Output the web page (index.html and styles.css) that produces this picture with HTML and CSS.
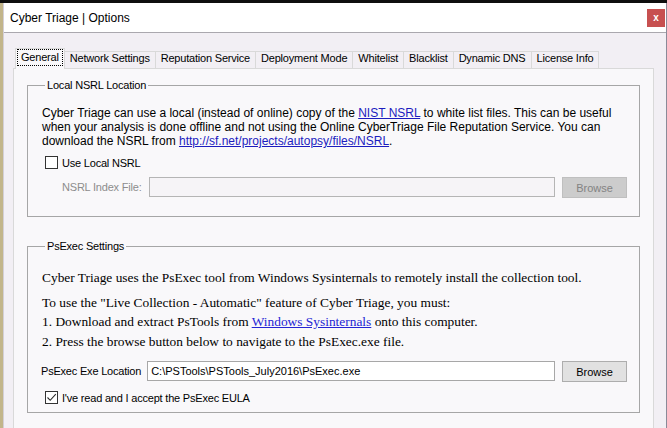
FILE: index.html
```html
<!DOCTYPE html>
<html lang="en">
<head>
<meta charset="utf-8">
<title>Cyber Triage | Options</title>
<link rel="stylesheet" href="styles.css">
</head>
<body>
<div class="screen">
  <div class="topstrip"></div>
  <div class="window">
    <header class="titlebar">
      <span class="title">Cyber Triage | Options</span>
      <button class="close" type="button">x</button>
    </header>
    <div class="client">
      <nav class="tabs">
        <div class="tab active"><span class="focus">General</span></div>
        <div class="tab">Network Settings</div>
        <div class="tab">Reputation Service</div>
        <div class="tab">Deployment Mode</div>
        <div class="tab">Whitelist</div>
        <div class="tab">Blacklist</div>
        <div class="tab">Dynamic DNS</div>
        <div class="tab">License Info</div>
      </nav>
      <div class="panel">
        <fieldset class="group group-nsrl">
          <legend>Local NSRL Location</legend>
          <p class="desc">Cyber Triage can use a local (instead of online) copy of the <a href="#">NIST NSRL</a> to white list files. This can be useful when your analysis is done offline and not using the Online CyberTriage File Reputation Service. You can download the NSRL from <a href="#">http://sf.net/projects/autopsy/files/NSRL</a>.</p>
          <label class="check check-nsrl"><span class="box"></span>Use Local NSRL</label>
          <div class="row row-nsrl">
            <span class="field-label disabled">NSRL Index File:</span>
            <span class="input input-disabled"></span>
            <button class="btn btn-disabled" type="button">Browse</button>
          </div>
        </fieldset>
        <fieldset class="group group-psexec">
          <legend>PsExec Settings</legend>
          <p class="serif first">Cyber Triage uses the PsExec tool from Windows Sysinternals to remotely install the collection tool.</p>
          <p class="serif">To use the "Live Collection - Automatic" feature of Cyber Triage, you must:<br>1. Download and extract PsTools from <a href="#">Windows Sysinternals</a> onto this computer.<br>2. Press the browse button below to navigate to the PsExec.exe file.</p>
          <div class="row row-psexec">
            <span class="field-label">PsExec Exe Location</span>
            <span class="input">C:\PSTools\PSTools_July2016\PsExec.exe</span>
            <button class="btn" type="button">Browse</button>
          </div>
          <label class="check check-eula"><span class="box checked"><svg width="11" height="11" viewBox="0 0 11 11"><path d="M1.5 5.5 L4.2 8.3 L9.8 2.2" fill="none" stroke="#2b2b2b" stroke-width="1.1"/></svg></span>I've read and I accept the PsExec EULA</label>
        </fieldset>
      </div>
    </div>
  </div>
</div>
</body>
</html>
```
FILE: styles.css
```css
* { box-sizing: border-box; }
html, body { margin: 0; padding: 0; }
body {
  width: 667px;
  height: 428px;
  overflow: hidden;
  background: #c2b58a;
  font-family: "Liberation Sans", Arial, sans-serif;
  color: #000;
}
.screen { display: flex; flex-direction: column; height: 428px; }
.topstrip { height: 3px; flex: none; background: #0e0e0e; }
.window {
  flex: 1;
  margin-left: 3px;
  display: flex;
  flex-direction: column;
  background: #f2eff4;
  border-left: 1px solid #d3cfd7;
  border-right: 1px solid #8a8a98;
}
.titlebar {
  height: 30px;
  flex: none;
  background: #ffffff;
  border-bottom: 1px solid #aaa8ae;
  display: flex;
  align-items: center;
  justify-content: space-between;
  padding-left: 6px;
}
.title { font-size: 12px; color: #000; }
.close {
  width: 18px;
  height: 18px;
  margin: 1px 1px 0 0;
  padding: 0;
  border: none;
  background: #c75050;
  color: #fff;
  font-family: "Liberation Sans", Arial, sans-serif;
  font-weight: bold;
  font-size: 10px;
  line-height: 16px;
}
.client {
  flex: 1;
  display: flex;
  flex-direction: column;
  padding: 15px 12px 0 9px;
}
.tabs {
  display: flex;
  align-items: flex-end;
  height: 20px;
  margin-left: 2px;
  font-size: 11px;
}
.tab {
  height: 17px;
  padding: 0 5px;
  line-height: 13px;
  border-top: 1px solid #d9d9d9;
  border-right: 1px solid #d9d9d9;
  white-space: nowrap;
  letter-spacing: -0.2px;
}
.tab.active {
  position: relative;
  z-index: 1;
  height: 21px;
  margin-bottom: -1px;
  padding: 0 1px;
  background: #f9f8fa;
  border: 1px solid #d9d9d9;
  border-bottom: none;
}
.focus {
  display: block;
  height: 17px;
  padding: 0 3px;
  line-height: 14px;
  border: 1px dotted #000;
}
.panel {
  flex: 1;
  background: #f9f8fa;
  border: 1px solid #d9d9d9;
  border-bottom: none;
  padding: 10px 13px 0 13px;
}
.group {
  margin: 0;
  padding: 0 12px 0 14px;
  border: 1px solid #a6a6a6;
  min-width: 0;
}
.group legend {
  margin-left: 3px;
  padding: 0 2px;
  font-size: 11px;
  line-height: 13px;
  letter-spacing: -0.2px;
}
.group-psexec { margin-top: 23px; padding-bottom: 8px; }
.group-nsrl { padding-bottom: 18px; }
.desc {
  margin: 14px 0 0;
  font-size: 12px;
  line-height: 14px;
}
.desc a { color: #1c1cbf; text-decoration: underline; }
.serif a { color: #2424d4; text-decoration: underline; }
.check {
  display: flex;
  align-items: center;
  height: 13px;
  margin-left: 3px;
  font-size: 11px;
  letter-spacing: -0.2px;
}
.check-nsrl { margin-top: 8px; }
.check-eula { margin-top: 9px; }
.box {
  width: 13px;
  height: 13px;
  flex: none;
  margin-right: 4px;
  border: 1px solid #333;
  background: #fff;
  display: flex;
  align-items: center;
  justify-content: center;
}
.row {
  display: flex;
  align-items: flex-start;
  height: 21px;
  font-size: 11px;
}
.row-nsrl { margin-top: 8px; }
.row-psexec { margin-top: 10px; }
.field-label {
  line-height: 20px;
  white-space: nowrap;
  letter-spacing: -0.2px;
}
.row-nsrl .field-label { margin-left: 20px; margin-right: 7px; }
.row-psexec .field-label { margin-left: -1px; margin-right: 6px; }
.disabled { color: #8d8d8d; }
.input {
  flex: 1;
  height: 20px;
  border: 1px solid #a7a7a7;
  background: #fff;
  padding: 0 3px;
  line-height: 18px;
  white-space: nowrap;
  overflow: hidden;
}
.input-disabled { background: #f6f4f7; border-color: #b5b5b5; }
.btn {
  width: 65px;
  height: 21px;
  margin-left: 7px;
  padding: 0;
  background: #e1e1e1;
  border: 1px solid #adadad;
  font-family: "Liberation Sans", Arial, sans-serif;
  font-size: 11px;
  color: #000;
}
.btn-disabled { background: #cccccc; border-color: #bfbfbf; color: #838383; }
.serif {
  margin: 0;
  font-family: "Liberation Serif", "Times New Roman", serif;
  font-size: 13.4px;
  line-height: 19.5px;
}
.serif.first { margin-top: 15px; margin-bottom: 5px; }
```
